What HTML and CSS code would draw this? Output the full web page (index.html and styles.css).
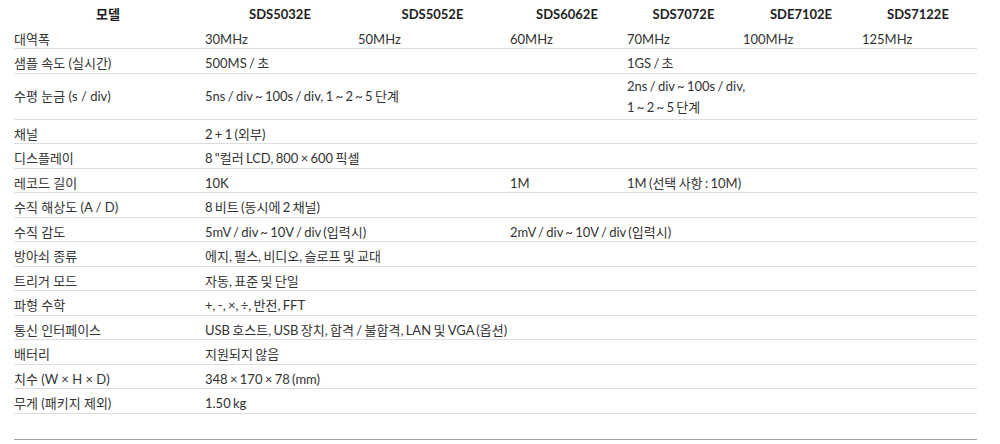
FILE: index.html
```html
<!DOCTYPE html>
<html lang="ko">
<head>
<meta charset="utf-8">
<title>사양</title>
<link rel="stylesheet" href="styles.css">
</head>
<body>
<div class="wrap">
<table class="spec">
<colgroup>
<col class="c1"><col class="c2"><col class="c3"><col class="c4"><col class="c5"><col class="c6"><col class="c7">
</colgroup>
<thead>
<tr><th>모델</th><th>SDS5032E</th><th>SDS5052E</th><th>SDS6062E</th><th>SDS7072E</th><th>SDE7102E</th><th>SDS7122E</th></tr>
</thead>
<tbody>
<tr class="first"><td>대역폭</td><td>30MHz</td><td>50MHz</td><td>60MHz</td><td>70MHz</td><td>100MHz</td><td>125MHz</td></tr>
<tr><td>샘플 속도 (실시간)</td><td colspan="3">500MS / 초</td><td colspan="3">1GS / 초</td></tr>
<tr class="two"><td>수평 눈금 (s / div)</td><td colspan="3">5ns / div ~ 100s / div, 1 ~ 2 ~ 5 단계</td><td colspan="3">2ns / div ~ 100s / div,<br>1 ~ 2 ~ 5 단계</td></tr>
<tr><td>채널</td><td colspan="6">2 + 1 (외부)</td></tr>
<tr><td>디스플레이</td><td colspan="6">8 "컬러 LCD, 800 × 600 픽셀</td></tr>
<tr><td>레코드 길이</td><td colspan="2">10K</td><td>1M</td><td colspan="3">1M (선택 사항 : 10M)</td></tr>
<tr><td>수직 해상도 (A / D)</td><td colspan="6">8 비트 (동시에 2 채널)</td></tr>
<tr><td>수직 감도</td><td colspan="2">5mV / div ~ 10V / div (입력시)</td><td colspan="4">2mV / div ~ 10V / div (입력시)</td></tr>
<tr><td>방아쇠 종류</td><td colspan="6">에지, 펄스, 비디오, 슬로프 및 교대</td></tr>
<tr><td>트리거 모드</td><td colspan="6">자동, 표준 및 단일</td></tr>
<tr><td>파형 수학</td><td colspan="6">+, -, ×, ÷, 반전, FFT</td></tr>
<tr><td>통신 인터페이스</td><td colspan="6">USB 호스트, USB 장치, 합격 / 불합격, LAN 및 VGA (옵션)</td></tr>
<tr><td>배터리</td><td colspan="6">지원되지 않음</td></tr>
<tr><td>치수 (W × H × D)</td><td colspan="6">348 × 170 × 78 (mm)</td></tr>
<tr><td>무게 (패키지 제외)</td><td colspan="6">1.50 kg</td></tr>
<tr class="blank"><td colspan="7"></td></tr>
</tbody>
</table>
</div>
</body>
</html>
```

FILE: styles.css
```css
html, body {
  margin: 0;
  padding: 0;
  background: #ffffff;
}
body {
  font-family: Lato, "Noto Sans CJK KR", sans-serif;
  font-size: 13px;
  color: #333333;
}
.wrap {
  width: 963px;
  margin-left: 14px;
}
.spec {
  width: 963px;
  border-collapse: collapse;
  table-layout: fixed;
}
.c1 { width: 191px; }
.c2 { width: 153px; }
.c3 { width: 152px; }
.c4 { width: 117px; }
.c5 { width: 116px; }
.c6 { width: 119px; }
.c7 { width: 115px; }
.spec th {
  font-weight: 700;
  color: #1e1e1e;
  text-align: center;
  padding: 5px 3px 1px 0;
  line-height: 18.5px;
  vertical-align: middle;
}
.spec td {
  text-align: left;
  padding: 5px 3px 0 0;
  line-height: 18.5px;
  vertical-align: middle;
  border-bottom: 1px solid #dddddd;
  white-space: nowrap;
  word-spacing: -1px;
}
.spec td:first-child {
  word-spacing: 0;
}
.spec tr.two td {
  line-height: 21.5px;
  padding-top: 2px;
  padding-bottom: 0;
}
.spec tr.blank td {
  height: 20px;
  border-bottom: 1px solid #a3a3a3;
}
```
